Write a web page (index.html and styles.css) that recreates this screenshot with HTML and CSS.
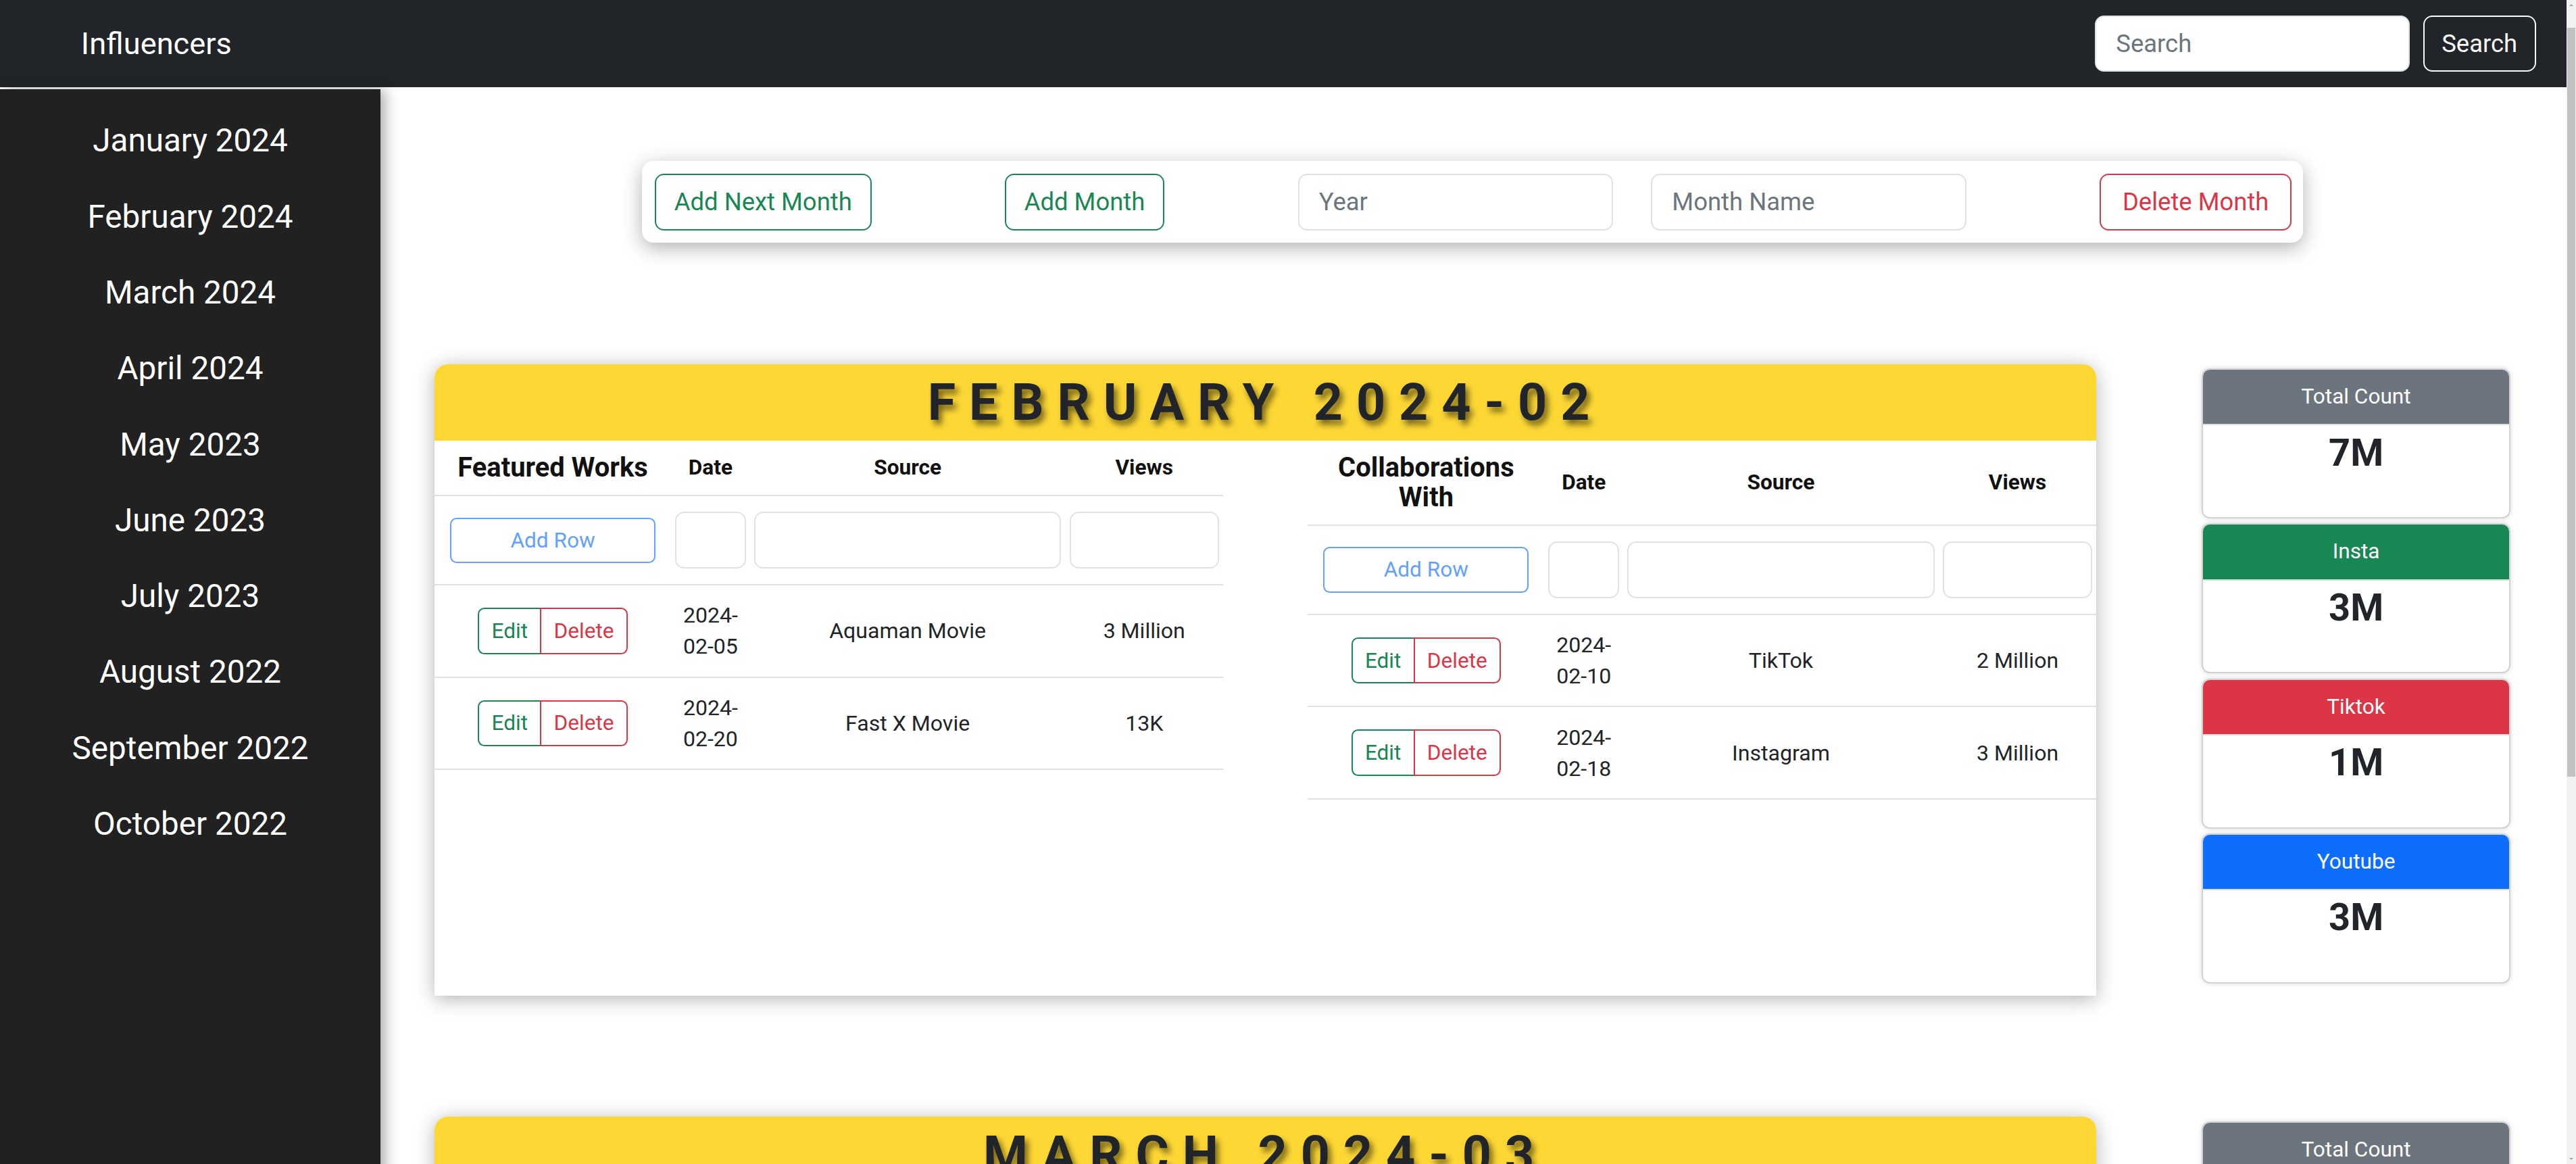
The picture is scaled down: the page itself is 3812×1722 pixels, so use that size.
FILE: index.html
```html
<!DOCTYPE html>
<html lang="en">
<head>
<meta charset="utf-8">
<title>Influencers</title>
<link rel="stylesheet" href="styles.css">
</head>
<body>
<nav class="topbar">
  <a class="brand" href="#">Influencers</a>
  <form class="search">
    <input class="search-input" type="text" placeholder="Search">
    <button class="search-btn" type="button">Search</button>
  </form>
</nav>
<div class="layout">
  <aside class="sidebar">
    <ul class="month-list">
      <li><a class="month-link" href="#">January 2024</a></li>
      <li><a class="month-link" href="#">February 2024</a></li>
      <li><a class="month-link" href="#">March 2024</a></li>
      <li><a class="month-link" href="#">April 2024</a></li>
      <li><a class="month-link" href="#">May 2023</a></li>
      <li><a class="month-link" href="#">June 2023</a></li>
      <li><a class="month-link" href="#">July 2023</a></li>
      <li><a class="month-link" href="#">August 2022</a></li>
      <li><a class="month-link" href="#">September 2022</a></li>
      <li><a class="month-link" href="#">October 2022</a></li>
    </ul>
  </aside>
  <main class="content">
    <div class="controls">
      <button class="btn btn-green" type="button">Add Next Month</button>
      <button class="btn btn-green" type="button">Add Month</button>
      <div class="control-inputs">
        <input class="field" type="text" placeholder="Year">
        <input class="field" type="text" placeholder="Month Name">
      </div>
      <button class="btn btn-red" type="button">Delete Month</button>
    </div>

    <section class="month-row">
      <div class="month-card">
        <h2 class="month-title">FEBRUARY 2024-02</h2>
        <div class="tables">
          <table class="works">
            <colgroup><col class="c1"><col class="c2"><col class="c3"><col class="c4"></colgroup>
            <thead>
              <tr><th class="lead">Featured Works</th><th>Date</th><th>Source</th><th>Views</th></tr>
            </thead>
            <tbody>
              <tr class="input-row">
                <td><button class="add-row" type="button">Add Row</button></td>
                <td><input class="cell-input" type="text"></td>
                <td><input class="cell-input" type="text"></td>
                <td><input class="cell-input" type="text"></td>
              </tr>
              <tr>
                <td><span class="btn-group"><button class="btn-sm btn-edit" type="button">Edit</button><button class="btn-sm btn-delete" type="button">Delete</button></span></td>
                <td>2024-<wbr>02-05</td>
                <td>Aquaman Movie</td>
                <td>3 Million</td>
              </tr>
              <tr>
                <td><span class="btn-group"><button class="btn-sm btn-edit" type="button">Edit</button><button class="btn-sm btn-delete" type="button">Delete</button></span></td>
                <td>2024-<wbr>02-20</td>
                <td>Fast X Movie</td>
                <td>13K</td>
              </tr>
            </tbody>
          </table>
          <table class="works">
            <colgroup><col class="c1"><col class="c2"><col class="c3"><col class="c4"></colgroup>
            <thead>
              <tr><th class="lead">Collaborations With</th><th>Date</th><th>Source</th><th>Views</th></tr>
            </thead>
            <tbody>
              <tr class="input-row">
                <td><button class="add-row" type="button">Add Row</button></td>
                <td><input class="cell-input" type="text"></td>
                <td><input class="cell-input" type="text"></td>
                <td><input class="cell-input" type="text"></td>
              </tr>
              <tr>
                <td><span class="btn-group"><button class="btn-sm btn-edit" type="button">Edit</button><button class="btn-sm btn-delete" type="button">Delete</button></span></td>
                <td>2024-<wbr>02-10</td>
                <td>TikTok</td>
                <td>2 Million</td>
              </tr>
              <tr>
                <td><span class="btn-group"><button class="btn-sm btn-edit" type="button">Edit</button><button class="btn-sm btn-delete" type="button">Delete</button></span></td>
                <td>2024-<wbr>02-18</td>
                <td>Instagram</td>
                <td>3 Million</td>
              </tr>
            </tbody>
          </table>
        </div>
      </div>
      <div class="stats">
        <div class="stat"><div class="stat-head head-grey">Total Count</div><p class="stat-value">7M</p></div>
        <div class="stat"><div class="stat-head head-green">Insta</div><p class="stat-value">3M</p></div>
        <div class="stat"><div class="stat-head head-red">Tiktok</div><p class="stat-value">1M</p></div>
        <div class="stat"><div class="stat-head head-blue">Youtube</div><p class="stat-value">3M</p></div>
      </div>
    </section>

    <section class="month-row">
      <div class="month-card">
        <h2 class="month-title">MARCH 2024-03</h2>
        <div class="tables">
          <table class="works">
            <colgroup><col class="c1"><col class="c2"><col class="c3"><col class="c4"></colgroup>
            <thead>
              <tr><th class="lead">Featured Works</th><th>Date</th><th>Source</th><th>Views</th></tr>
            </thead>
            <tbody>
              <tr class="input-row">
                <td><button class="add-row" type="button">Add Row</button></td>
                <td><input class="cell-input" type="text"></td>
                <td><input class="cell-input" type="text"></td>
                <td><input class="cell-input" type="text"></td>
              </tr>
            </tbody>
          </table>
          <table class="works">
            <colgroup><col class="c1"><col class="c2"><col class="c3"><col class="c4"></colgroup>
            <thead>
              <tr><th class="lead">Collaborations With</th><th>Date</th><th>Source</th><th>Views</th></tr>
            </thead>
            <tbody>
              <tr class="input-row">
                <td><button class="add-row" type="button">Add Row</button></td>
                <td><input class="cell-input" type="text"></td>
                <td><input class="cell-input" type="text"></td>
                <td><input class="cell-input" type="text"></td>
              </tr>
            </tbody>
          </table>
        </div>
      </div>
      <div class="stats">
        <div class="stat"><div class="stat-head head-grey">Total Count</div><p class="stat-value">0</p></div>
        <div class="stat"><div class="stat-head head-green">Insta</div><p class="stat-value">0</p></div>
        <div class="stat"><div class="stat-head head-red">Tiktok</div><p class="stat-value">0</p></div>
        <div class="stat"><div class="stat-head head-blue">Youtube</div><p class="stat-value">0</p></div>
      </div>
    </section>
  </main>
</div>
<div class="scrollbar" aria-hidden="true">
  <span class="sb-arrow sb-up"></span>
  <span class="sb-thumb"></span>
  <span class="sb-arrow sb-down"></span>
</div>
</body>
</html>
```
FILE: styles.css
```css
html {
  zoom: 2.4311;
}
body {
  margin: 0 5.76px 0 0;
  font-family: Roboto, "Liberation Sans", Arial, sans-serif;
  color: #212529;
  background: #fff;
}
button, input {
  font-family: Roboto, "Liberation Sans", Arial, sans-serif;
}

/* top bar */
.topbar {
  height: 53.2px;
  box-sizing: border-box;
  background: #212529;
  display: flex;
  align-items: center;
  justify-content: space-between;
  padding: 0 18.6px 0 49.3px;
}
.brand {
  color: #fff;
  font-size: 18.6px;
  line-height: 1;
  text-decoration: none;
}
.search {
  display: flex;
  gap: 8px;
  margin: 0;
}
.search-input {
  width: 191.7px;
  height: 34.4px;
  box-sizing: border-box;
  border: 1px solid #dee2e6;
  border-radius: 5.5px;
  padding: 0 12px;
  font-size: 15px;
  color: #212529;
  background: #fff;
}
.search-input::placeholder { color: #6c757d; }
.search-btn {
  width: 68.8px;
  height: 34.4px;
  box-sizing: border-box;
  padding: 0;
  background: transparent;
  border: 1px solid #f8f9fa;
  border-radius: 5.5px;
  color: #f8f9fa;
  font-size: 15px;
}

/* layout */
.layout {
  display: flex;
  margin-top: 1px;
}
.sidebar {
  width: 231.6px;
  flex: none;
  background: #212121;
  box-shadow: 3px 0 8px rgba(0, 0, 0, 0.35);
  padding-top: 8.7px;
}
.month-list {
  list-style: none;
  margin: 0;
  padding: 0;
}
.month-link {
  display: block;
  color: #fff;
  text-decoration: none;
  text-align: center;
  font-size: 19.6px;
  line-height: 30.2px;
  padding: 8px 0;
}

.content {
  flex: 1;
  min-width: 0;
  padding: 0 34px 15px 32.9px;
}

/* controls */
.controls {
  width: 1011px;
  box-sizing: border-box;
  margin: 43.7px auto 0;
  padding: 7.7px 7px 7.7px 7.7px;
  display: flex;
  align-items: center;
  justify-content: space-between;
  background: #fff;
  border-radius: 7px;
  box-shadow: 0 3px 12px rgba(0, 0, 0, 0.3);
}
.btn {
  height: 34.5px;
  box-sizing: border-box;
  padding: 0 11px;
  font-size: 15px;
  background: #fff;
  border: 1px solid;
  border-radius: 5.5px;
}
.btn-green { color: #198754; border-color: #198754; }
.btn-red { color: #dc3545; border-color: #dc3545; padding: 0 13px; }
.control-inputs {
  display: flex;
  gap: 23px;
}
.field {
  width: 192px;
  height: 34.5px;
  box-sizing: border-box;
  border: 1px solid #dee2e6;
  border-radius: 5.5px;
  padding: 0 12px;
  font-size: 15px;
  color: #212529;
}
.field::placeholder { color: #6c757d; }

/* month sections */
.month-row {
  display: flex;
  gap: 64px;
  margin-top: 73.8px;
}
.month-card {
  flex: 1;
  min-width: 0;
  height: 384.3px;
  background: #fff;
  border-radius: 8px 8px 0 0;
  box-shadow: 0 2px 12px rgba(0, 0, 0, 0.3);
}
.month-title {
  margin: 0;
  height: 46.7px;
  line-height: 46.7px;
  background: #fdd835;
  border-radius: 8px 8px 0 0;
  text-align: center;
  font-size: 31px;
  font-weight: 700;
  letter-spacing: 8.2px;
  color: #212529;
  text-shadow: 2px 3px 4px rgba(0, 0, 0, 0.55);
}
.tables {
  display: flex;
  align-items: flex-start;
  justify-content: space-between;
}
.works {
  width: 480px;
  border-collapse: collapse;
  table-layout: fixed;
}
.c1 { width: 144px; }
.c2 { width: 48px; }
.c3 { width: 192px; }
.c4 { width: 96px; }
.works th {
  font-size: 13px;
  font-weight: 700;
  line-height: 18px;
  padding: 7.5px 2.5px;
  border-bottom: 1px solid #dee2e6;
  text-align: center;
  vertical-align: middle;
  color: #111;
}
.works th.lead { font-size: 16.4px; }
.works td {
  font-size: 13.2px;
  line-height: 19px;
  padding: 8.7px 2.5px;
  border-bottom: 1px solid #dee2e6;
  text-align: center;
  vertical-align: middle;
}
.works .input-row td {
  padding: 9.45px 2.5px;
}
.cell-input {
  display: block;
  width: 100%;
  height: 34.4px;
  box-sizing: border-box;
  border: 1px solid #dee2e6;
  border-radius: 5.5px;
  background: #fff;
}
.add-row {
  width: 125px;
  height: 27.7px;
  box-sizing: border-box;
  font-size: 13px;
  color: #62a1fe;
  background: #fff;
  border: 1px solid #62a1fe;
  border-radius: 4px;
  vertical-align: middle;
}
.btn-group {
  display: inline-flex;
  vertical-align: middle;
}
.btn-sm {
  height: 28.2px;
  box-sizing: border-box;
  padding: 0 7.5px;
  font-size: 13px;
  background: #fff;
  border: 1px solid;
}
.btn-edit {
  color: #198754;
  border-color: #198754;
  border-right: none;
  border-radius: 4px 0 0 4px;
}
.btn-delete {
  color: #dc3545;
  border-color: #dc3545;
  border-radius: 0 4px 4px 0;
}

/* stats */
.stats {
  width: 188.2px;
  flex: none;
  padding-top: 2.7px;
  display: flex;
  flex-direction: column;
  gap: 3px;
}
.stat {
  height: 91.3px;
  box-sizing: border-box;
  border: 1px solid #d2d2d2;
  border-radius: 5px;
  overflow: hidden;
  background: #fff;
  box-shadow: 0 0 3px rgba(0, 0, 0, 0.15);
}
.stat-head {
  height: 33.8px;
  box-sizing: border-box;
  line-height: 33px;
  text-align: center;
  color: #fff;
  font-size: 13px;
  border-bottom: 1px solid #dcdcdc;
}
.head-grey { background: #6c757d; }
.head-green { background: #198754; }
.head-red { background: #dc3545; }
.head-blue { background: #0d6efd; }
.stat-value {
  margin: 0;
  padding-top: 3px;
  text-align: center;
  font-size: 23px;
  font-weight: 700;
  line-height: 27.6px;
  color: #212529;
}

/* browser scrollbar as seen in the capture */
.scrollbar {
  position: fixed;
  top: 0;
  right: 0;
  bottom: 0;
  width: 5.76px;
  background: #f1f1f1;
  display: flex;
  flex-direction: column;
  align-items: center;
}
.sb-arrow {
  width: 0;
  height: 0;
  border-left: 1.5px solid transparent;
  border-right: 1.5px solid transparent;
  margin: 2.4px 0;
}
.sb-up { border-bottom: 1.6px solid #a3a3a3; }
.sb-down { border-top: 1.6px solid #a3a3a3; margin-top: auto; }
.sb-thumb {
  margin-top: 10.8px;
  width: 4.9px;
  height: 455.8px;
  background: #c1c1c1;
}
```
